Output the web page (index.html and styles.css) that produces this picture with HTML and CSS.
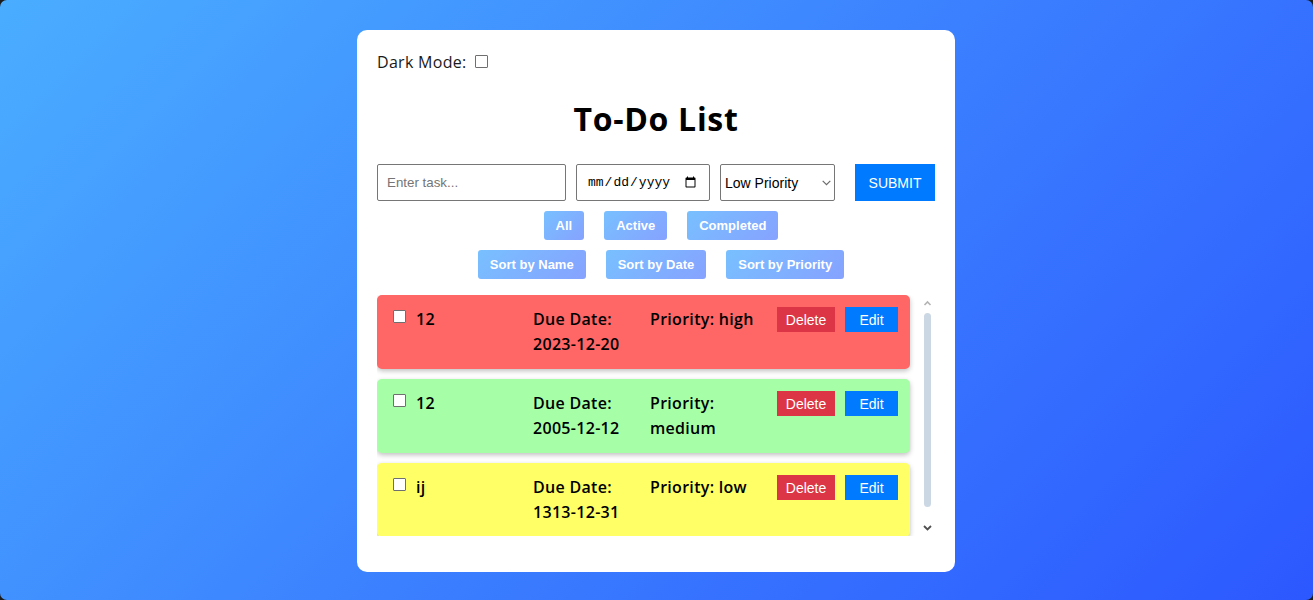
FILE: index.html
```html
<!DOCTYPE html>
<html lang="en">
<head>
<meta charset="UTF-8">
<title>To-Do List</title>
<link rel="stylesheet" href="styles.css">
</head>
<body>
<div class="card">
  <div class="mode-row">
    <label for="dark" class="mode-label">Dark Mode:</label>
    <input type="checkbox" id="dark" class="box mode-check">
  </div>
  <h1 class="title">To-Do List</h1>
  <form class="task-form">
    <input type="text" class="task-input" placeholder="Enter task...">
    <input type="date" class="date-input">
    <span class="select-wrap">
      <select class="priority-select">
        <option>Low Priority</option>
        <option>Medium Priority</option>
        <option>High Priority</option>
      </select>
      <svg class="select-arrow" width="9" height="6" viewBox="0 0 9 6"><path d="M0.7 0.8 L4.5 4.6 L8.3 0.8" fill="none" stroke="#6b6b6b" stroke-width="1.2"/></svg>
    </span>
    <button type="button" class="submit-btn">SUBMIT</button>
  </form>
  <div class="btn-row">
    <button class="pill">All</button>
    <button class="pill">Active</button>
    <button class="pill">Completed</button>
  </div>
  <div class="btn-row">
    <button class="pill">Sort by Name</button>
    <button class="pill">Sort by Date</button>
    <button class="pill">Sort by Priority</button>
  </div>
  <div class="list-wrap">
    <ul class="task-list">
      <li class="task task-high">
        <input type="checkbox" class="box task-check">
        <span class="task-name">12</span>
        <span class="task-date">Due Date: 2023-12-20</span>
        <span class="task-priority">Priority: high</span>
        <button class="del-btn">Delete</button>
        <button class="edit-btn">Edit</button>
      </li>
      <li class="task task-medium">
        <input type="checkbox" class="box task-check">
        <span class="task-name">12</span>
        <span class="task-date">Due Date: 2005-12-12</span>
        <span class="task-priority">Priority: medium</span>
        <button class="del-btn">Delete</button>
        <button class="edit-btn">Edit</button>
      </li>
      <li class="task task-low">
        <input type="checkbox" class="box task-check">
        <span class="task-name">ij</span>
        <span class="task-date">Due Date: 1313-12-31</span>
        <span class="task-priority">Priority: low</span>
        <button class="del-btn">Delete</button>
        <button class="edit-btn">Edit</button>
      </li>
    </ul>
    <div class="scrollbar">
      <svg class="sb-arrow" width="15" height="16" viewBox="0 0 15 16"><path d="M4.5 10 L7.5 7 L10.5 10" fill="none" stroke="#b4b4b4" stroke-width="1.6"/></svg>
      <div class="sb-track"><div class="sb-thumb"></div></div>
      <svg class="sb-arrow" width="15" height="16" viewBox="0 0 15 16"><path d="M4 6 L7.5 9.5 L11 6" fill="none" stroke="#505050" stroke-width="1.8"/></svg>
    </div>
  </div>
</div>
</body>
</html>
```

FILE: styles.css
```css
* {
  box-sizing: border-box;
}

html {
  background: #1b1b1b;
}

body {
  margin: 0;
  height: 600px;
  overflow: hidden;
  border-radius: 7px;
  background: linear-gradient(135deg, #4aadff 0%, #3a7dff 55%, #2c58ff 100%);
  font-family: "Open Sans", "DejaVu Sans", sans-serif;
  display: flex;
  justify-content: center;
  padding: 30px 1px 0 0;
}

.card {
  width: 598px;
  height: 542px;
  background: #fff;
  border-radius: 10px;
  padding: 20px 20px 0;
}

.box {
  appearance: none;
  -webkit-appearance: none;
  width: 13px;
  height: 13px;
  border: 1px solid #6f6f6f;
  border-radius: 1px;
  background: #fff;
  flex: none;
}

.mode-row {
  display: flex;
  align-items: center;
  height: 24px;
  font-size: 16px;
  letter-spacing: 0.3px;
  color: #1a1a1a;
}

.mode-check {
  margin: 0 0 1px 8px;
}

.title {
  margin: 21px 0 21px;
  font-size: 32px;
  line-height: 48px;
  font-weight: 700;
  letter-spacing: 0.7px;
  text-align: center;
  color: #000;
}

.task-form {
  display: flex;
  height: 37px;
}

.task-input,
.date-input,
.priority-select {
  height: 37px;
  border: 1px solid #767676;
  border-radius: 2px;
  font-family: "Liberation Sans", Arial, sans-serif;
  font-size: 13.33px;
  margin: 0;
  background: #fff;
  color: #000;
}

.task-input {
  width: 189px;
  padding: 0 9px;
  margin-right: 10px;
}

.task-input::placeholder {
  color: #757575;
}

.date-input {
  width: 134px;
  padding: 0 10px;
  margin-right: 10px;
  font-family: "Liberation Mono", "DejaVu Sans Mono", monospace;
  font-size: 13px;
}

.select-wrap {
  position: relative;
  display: block;
  width: 115px;
  height: 37px;
  margin-right: 20px;
}

.priority-select {
  appearance: none;
  -webkit-appearance: none;
  width: 115px;
  padding: 0 0 0 4px;
  font-size: 14px;
}

.select-arrow {
  position: absolute;
  left: 102px;
  top: 16px;
  pointer-events: none;
}

.submit-btn {
  width: 80px;
  height: 37px;
  border: none;
  background: #007bff;
  color: #fff;
  font-family: "Liberation Sans", Arial, sans-serif;
  font-size: 14px;
  padding: 0;
}

.btn-row {
  display: flex;
  justify-content: center;
  gap: 20px;
  padding-left: 10px;
  margin-top: 10px;
}

.pill {
  height: 29px;
  padding: 0 12px;
  border: none;
  border-radius: 3px;
  background: linear-gradient(135deg, #78c0ff 0%, #86a2ff 100%);
  color: #fff;
  font-family: "Liberation Sans", Arial, sans-serif;
  font-weight: 700;
  font-size: 13px;
}

.list-wrap {
  display: flex;
  margin-top: 16px;
  height: 241px;
}

.task-list {
  flex: 1;
  list-style: none;
  margin: 0;
  padding: 0 10px 0 0;
  overflow: hidden;
}

.scrollbar {
  width: 15px;
  display: flex;
  flex-direction: column;
  flex: none;
}

.sb-arrow {
  display: block;
  flex: none;
}

.sb-track {
  flex: 1;
  padding: 2px 4px 0;
}

.sb-thumb {
  width: 7px;
  height: 194px;
  border-radius: 4px;
  background: #cbd8e4;
}

.task {
  display: flex;
  align-items: flex-start;
  padding: 12px;
  margin-bottom: 10px;
  border-radius: 5px;
  box-shadow: 0 2px 5px rgba(0, 0, 0, 0.25);
  font-size: 16px;
  line-height: 25px;
  font-weight: 600;
  letter-spacing: 0.3px;
  color: #000;
}

.task-high {
  background: #ff6666;
}

.task-medium {
  background: #a6ffa6;
}

.task-low {
  background: #ffff66;
}

.task-check {
  margin: 3px 10px 0 4px;
}

.task-name {
  width: 117px;
  flex: none;
}

.task-date {
  width: 117px;
  flex: none;
}

.task-priority {
  width: 127px;
  flex: none;
}

.del-btn,
.edit-btn {
  height: 25px;
  border: none;
  color: #fff;
  font-family: "Liberation Sans", Arial, sans-serif;
  font-size: 14px;
  letter-spacing: 0;
  padding: 0;
  flex: none;
}

.del-btn {
  width: 58px;
  background: #dc3545;
}

.edit-btn {
  width: 53px;
  margin-left: 10px;
  background: #007bff;
}
```
